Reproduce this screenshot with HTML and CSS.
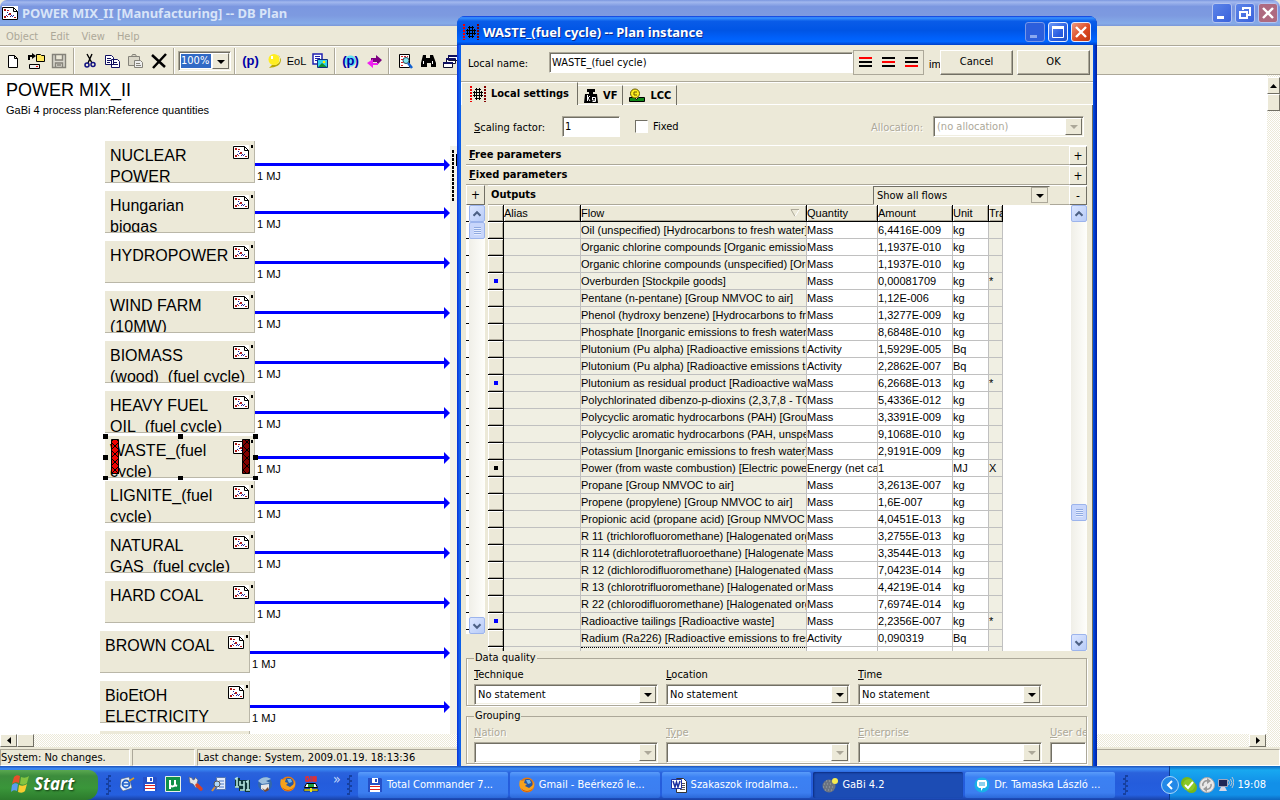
FILE: index.html
```html
<!DOCTYPE html>
<html lang="en">
<head>
<meta charset="utf-8">
<title>POWER MIX_II [Manufacturing] -- DB Plan</title>
<link rel="stylesheet" href="styles.css">
</head>
<body>
<svg class="defs" aria-hidden="true">
  <symbol id="plan" viewBox="0 0 16 14"><path fill="#fff" d="M0 0h16v14H0z"/><path fill="none" stroke="#000" d="M.5 1.500h11l4 4v8H.5zM11.500 1.500v4h4"/><path fill="#b01818" d="M2 3h2v2H2zM5 4h2v1H5zM7 7h2v2H7zM2 10h2v2H2zM5 10h1v1H5zM12 11h2v1h-2z"/><path fill="#2222a0" d="M5 6h1v1H5zM4 9h1v1H4zM9 9h1v1H9zM11 9h1v1h-1zM6 8h1v1H6zM10 10h1v1h-1zM8 10h1v1H8z"/></symbol>
  <symbol id="floppy" viewBox="0 0 16 16"><path fill="#2450c8" d="M1 1h13l1 1v13H1z"/><path fill="#fff" d="M5 1h6v5H5z"/><path fill="#2450c8" d="M8 2h2v3H8z"/><path fill="#fff" d="M3 8h10v7H3z"/><path fill="#e02020" d="M3 9h10v1H3zM3 12h10v1H3z"/></symbol>
  <symbol id="firefox" viewBox="0 0 16 16"><circle cx="8" cy="8" r="7.5" fill="#e87a10"/><circle cx="8.500" cy="7" r="5" fill="#2458a8"/><path fill="#6fb4e8" d="M7 3l4 0 1 3-3 1z"/><path fill="#f6a21c" d="M1 3l2 1 3-1-1 3 3 1-2 2 4 2 4-3 1-4c1 5-1 10-7 11C2 15-1 9 1 3z"/><path fill="#c84808" d="M2 11c3 4 9 4 12 0-2 4-9 6-12 0z"/></symbol>
  <symbol id="instance" viewBox="0 0 16 16"><path stroke="#f00000" stroke-width="2" stroke-dasharray="2 1" d="M1 0v16"/><path stroke="#800000" stroke-width="2" stroke-dasharray="2 1" d="M15 0v16"/><path fill="none" stroke="#000" d="M5 3.500h6M3 6.500h10M3 9.500h10M5 12.500h6M4.500 5v6M11.500 5v6M6.500 2v12M9.500 2v12"/></symbol>
  <symbol id="up" viewBox="0 0 16 16"><path fill="none" stroke="#4d6185" stroke-width="2.4" d="M4 10l4-4 4 4"/></symbol>
  <symbol id="down" viewBox="0 0 16 16"><path fill="none" stroke="#4d6185" stroke-width="2.4" d="M4 6l4 4 4-4"/></symbol>
</svg>

<div class="desktop">
<main class="window">
  <header class="titlebar inactive">
    <svg class="title-icon" width="16" height="14"><use href="#plan"/></svg>
    <h1>POWER MIX_II [Manufacturing] -- DB Plan</h1>
    <div class="caption">
      <button aria-label="Minimize"><svg width="18" height="18"><path fill="#fff" d="M4 12h7v3H4z"/></svg></button>
      <button aria-label="Restore"><svg width="18" height="18"><path fill="none" stroke="#fff" stroke-width="2" d="M7 6V4h7v7h-2M4 8h7v6H4z"/></svg></button>
      <button class="close" aria-label="Close"><svg width="18" height="18"><path stroke="#fff" stroke-width="2.4" d="M4 4l10 10M14 4L4 14"/></svg></button>
    </div>
  </header>
  <nav class="menubar"><button>Object</button><button>Edit</button><button>View</button><button>Help</button></nav>
  <div class="toolbar">
    <button aria-label="New"><svg width="16" height="16"><path fill="#fff" stroke="#000" d="M3.500 2.500h6l3 3v9h-9zM9.500 2.500v3h3"/></svg></button>
    <button aria-label="Open"><svg width="18" height="18"><path fill="#ffe860" stroke="#000" d="M9.500 2.500h4l1 1h3v6h-8z"/><path fill="#eee" stroke="#000" d="M2.500 12.500h10v4h-10z"/><path fill="none" stroke="#000" stroke-width="2" d="M2 8V4h3"/><path d="M5 1l4 3-4 3z"/><path fill="#d00" d="M9 14h2v1H9z"/></svg></button>
    <button aria-label="Save"><svg width="16" height="16"><path fill="#d8d6cc" stroke="#85837a" stroke-width="1.400" d="M1.500 1.500h13v13h-13zM4.500 2v5h7V2M4.500 14v-4h7v4M6 12h4"/></svg></button>
    <span class="sep"></span>
    <button aria-label="Cut"><svg width="16" height="16"><path stroke="#000" stroke-width="1.400" d="M5 1l5 9M10 1L6 10"/><g fill="none" stroke="#101080" stroke-width="1.500"><circle cx="5" cy="12" r="2"/><circle cx="11" cy="11.500" r="2"/></g></svg></button>
    <button aria-label="Copy"><svg width="17" height="16"><path fill="#fff" stroke="#101060" d="M1.500 2.500h6l2 2v7h-8zM7.500 6.500h6l2 2v6h-8z"/><path stroke="#101060" d="M3 5.500h4M3 7.500h4M3 9.500h3M9 9.500h4M9 11.500h5"/></svg></button>
    <button aria-label="Paste"><svg width="17" height="16"><path fill="#dad7c8" stroke="#85837a" d="M1.500 3.500h11v9h-11zM4.500 3.500l1-2h3l1 2z"/><path fill="#eee" stroke="#85837a" d="M7.500 7.500h6l2 2v5h-8zM9 10.500h4M9 12.500h5"/></svg></button>
    <button aria-label="Delete"><svg width="18" height="16"><path stroke="#000" stroke-width="2.500" d="M2 2l13 12M16 1L3 15"/></svg></button>
    <span class="sep"></span>
    <span class="combo zoom"><select aria-label="Zoom"><option>100%</option></select><i></i></span>
    <span class="sep"></span>
    <button class="glyph" aria-label="Parameters">(p)</button>
    <button aria-label="Note"><svg width="16" height="16"><path fill="#b8a800" d="M3 15l3-3c9 1 10-8 6-10l3 4c0 7-5 8-12 9z"/><circle cx="8" cy="6.500" r="5.500" fill="#ffee20"/><path fill="#fff" d="M5 3h2v3H5z"/></svg></button>
    <button class="eol">EoL</button>
    <button aria-label="Picture"><svg width="16" height="16"><path fill="#fff" stroke="#2020b0" stroke-width="1.500" d="M1 1h9v10H1z"/><path stroke="#2020b0" d="M3 3.500h5M3 5.500h5M3 7.500h3"/><path fill="#30d0f0" stroke="#103080" d="M5.500 6.500h10v8h-10z"/><path fill="#109030" d="M6 14l4-4 5 4z"/><circle cx="12" cy="9" r="1.300" fill="#fe0"/></svg></button>
    <span class="sep"></span>
    <button class="glyph disc" aria-label="Process">(p)</button>
    <button aria-label="Exchange"><svg width="16" height="16"><path fill="#7c0080" d="M5 5h5V2l6 5-5 5V9H5z"/><path fill="#f020f0" d="M12 10H7V6L1 10l6 5v-3h5z"/></svg></button>
    <span class="sep"></span>
    <button aria-label="Find in page"><svg width="16" height="16"><path fill="#fff" stroke="#000" d="M2.500 1.500h10v13h-10z"/><path stroke="#d02020" stroke-dasharray="2 1" d="M4 3.500h7M4 6.500h3M4 9.500h2M4 12.500h3"/><circle cx="9" cy="7.500" r="3" fill="#80e8f0" stroke="#345"/><path stroke="#1060d0" stroke-width="2.500" d="M11 10l4 5"/></svg></button>
    <button aria-label="Search"><svg width="16" height="16"><path d="M3 2h3v3h4V2h3l3 8v4h-5v-4H7v4H1v-4z"/><path fill="#fff" d="M3 8h1v3H3zM12 8h1v3h-1z"/></svg></button>
    <button aria-label="Windows"><svg width="16" height="16"><path fill="#fff" stroke="#101030" d="M5.500 2.500h10v5h-10zM3.500 5.500h9v5h-9zM.500 9.500h9v5h-9z"/><path stroke="#101060" stroke-width="2" d="M5 3h11M3 6h9M0 10h10"/></svg></button>
  </div>

  <div class="workspace">
    <section class="canvas">
      <h2>POWER MIX_II</h2>
      <p>GaBi 4 process plan:Reference quantities</p>

      <article class="node" style="left:105px;top:66px">NUCLEAR POWER<svg width="16" height="14"><use href="#plan"/></svg></article>
      <article class="node" style="left:105px;top:116px">Hungarian<br>biogas<svg width="16" height="14"><use href="#plan"/></svg></article>
      <article class="node" style="left:105px;top:166px">HYDROPOWER<svg width="16" height="14"><use href="#plan"/></svg></article>
      <article class="node" style="left:105px;top:216px">WIND FARM (10MW)<svg width="16" height="14"><use href="#plan"/></svg></article>
      <article class="node" style="left:105px;top:266px">BIOMASS (wood)_(fuel cycle)<svg width="16" height="14"><use href="#plan"/></svg></article>
      <article class="node" style="left:105px;top:316px">HEAVY FUEL OIL_(fuel cycle)<svg width="16" height="14"><use href="#plan"/></svg></article>
      <article class="node" style="left:105px;top:361px">WASTE_(fuel cycle)<svg width="16" height="14"><use href="#plan"/></svg></article>
      <article class="node" style="left:105px;top:406px">LIGNITE_(fuel cycle)<svg width="16" height="14"><use href="#plan"/></svg></article>
      <article class="node" style="left:105px;top:456px">NATURAL GAS_(fuel cycle)<svg width="16" height="14"><use href="#plan"/></svg></article>
      <article class="node" style="left:105px;top:506px">HARD COAL<svg width="16" height="14"><use href="#plan"/></svg></article>
      <article class="node" style="left:100px;top:556px">BROWN COAL<svg width="16" height="14"><use href="#plan"/></svg></article>
      <article class="node" style="left:100px;top:606px">BioEtOH ELECTRICITY<svg width="16" height="14"><use href="#plan"/></svg></article>
      <article class="node" style="left:100px;top:656px"></article>

      <div class="link" style="left:255px;top:84px">1 MJ</div>
      <div class="link" style="left:255px;top:132px">1 MJ</div>
      <div class="link" style="left:255px;top:182px">1 MJ</div>
      <div class="link" style="left:255px;top:232px">1 MJ</div>
      <div class="link" style="left:255px;top:282px">1 MJ</div>
      <div class="link" style="left:255px;top:332px">1 MJ</div>
      <div class="link" style="left:255px;top:377px">1 MJ</div>
      <div class="link" style="left:255px;top:422px">1 MJ</div>
      <div class="link" style="left:255px;top:472px">1 MJ</div>
      <div class="link" style="left:255px;top:522px">1 MJ</div>
      <div class="link wide" style="left:250px;top:572px">1 MJ</div>
      <div class="link wide" style="left:250px;top:626px">1 MJ</div>

      <svg class="selection" style="left:103px;top:359px" width="156" height="46">
        <defs><pattern id="hatch" width="8" height="8" patternUnits="userSpaceOnUse"><path stroke="#000" d="M0 0l8 8M8 0L0 8"/></pattern></defs>
        <path fill="#f00000" stroke="#000" d="M8.500 5.500h7v34h-7z"/><path fill="url(#hatch)" d="M8 5h8v35H8z"/>
        <path fill="#800000" stroke="#000" d="M139.500 5.500h7v34h-7z"/><path fill="url(#hatch)" d="M139 5h8v35h-8z"/>
        <path d="M0 0h5v5H0zM75 0h5v5h-5zM150 0h5v5h-5zM0 21h5v5H0zM150 21h5v5h-5zM0 42h5v4H0zM75 42h5v4h-5zM150 42h5v4h-5z"/>
      </svg>
      <div class="target"></div>
    </section>
    <div class="vbar"><button aria-label="Scroll up"><svg width="7" height="4"><path d="M0 4l3.500-4L7 4z"/></svg></button><button aria-label="Thumb"></button></div>
  </div>
  <div class="hbar"><button aria-label="Scroll left"><svg width="4" height="7"><path d="M4 0v7L0 3.500z"/></svg></button><button aria-label="Thumb"></button><span></span><button aria-label="Scroll right"><svg width="4" height="7"><path d="M0 0v7l4-3.500z"/></svg></button></div>
  <footer class="status"><span>System: No changes.</span><span></span><span>Last change: System, 2009.01.19. 18:13:36</span></footer>
</main>

<section class="dialog" aria-label="Plan instance">
  <header class="titlebar">
    <svg class="title-icon" width="16" height="16"><use href="#instance"/></svg>
    <h1>WASTE_(fuel cycle) -- Plan instance</h1>
    <div class="caption">
      <button class="dim" aria-label="Minimize dialog"><svg width="18" height="18"><path fill="#8ba8f0" d="M4 12h7v3H4z"/></svg></button>
      <button aria-label="Maximize dialog"><svg width="18" height="18"><path fill="#fff" d="M3 3h12v3H3z"/><path fill="none" stroke="#fff" d="M3.500 4.500h11v10h-11z"/></svg></button>
      <button class="close" aria-label="Close dialog"><svg width="18" height="18"><path stroke="#fff" stroke-width="2.400" d="M4 4l10 10M14 4L4 14"/></svg></button>
    </div>
  </header>
  <div class="dialog-body">
    <div class="name-row">
      <label for="name">Local name:</label>
      <input id="name" class="field" type="text" value="WASTE_(fuel cycle)">
      <div class="aligns">
        <button class="a1" aria-label="Top"><i></i><i></i><i></i></button><button class="a2" aria-label="Middle"><i></i><i></i><i></i></button><button class="a3" aria-label="Bottom"><i></i><i></i><i></i></button>
      </div>
      <span class="im">im</span>
      <button class="push">Cancel</button><button class="push">OK</button>
    </div>
    <div class="tabs">
      <button class="tab active"><svg width="16" height="16"><use href="#instance"/></svg>Local settings</button>
      <button class="tab"><svg width="14" height="16"><path d="M3 1h8v3H9v2h4l1 9H0l1-9h4V4H3z"/><path stroke="#fff" fill="none" d="M3.500 7v6M6 8l-2 2 2 3M8.500 9.500h3v4h-3M8.500 9v3h3"/></svg>VF</button>
      <button class="tab"><svg width="16" height="16"><path fill="#108818" stroke="#000" d="M.500 9.500h5l2 2 2-2h6v4H.500z"/><circle cx="6" cy="5.500" r="4.500" fill="#ffee20" stroke="#665800"/><path fill="none" stroke="#665800" d="M8 4H5v3h3"/></svg>LCC</button>
    </div>
    <div class="panel">
      <div class="scale-row">
        <label for="scale"><u>S</u>caling factor:</label>
        <input id="scale" class="field" type="text" value="1">
        <label class="check"><input type="checkbox">Fixed</label>
        <label class="off allocation" for="alloc">Allocation:</label>
        <span class="combo off"><select id="alloc" disabled><option>(no allocation)</option></select><i></i></span>
      </div>
      <div class="bar"><b><u>F</u>ree parameters</b><button aria-label="Expand free parameters">+</button></div>
      <div class="bar"><b><u>F</u>ixed parameters</b><button aria-label="Expand fixed parameters">+</button></div>
      <div class="flows">
        <div class="side">
          <button class="plus" aria-label="Expand inputs">+</button>
          <div class="side-body"><div class="ticks"></div>
            <div class="xpbar"><button aria-label="Up"><svg width="14" height="14"><use href="#up"/></svg></button><button class="thumb" aria-label="Thumb"></button><span></span><button aria-label="Down"><svg width="14" height="14"><use href="#down"/></svg></button></div>
          </div>
        </div>
        <div class="outputs">
          <div class="bar out"><b>Outputs</b><span class="combo flat"><select aria-label="Flow filter"><option>Show all flows</option></select><i></i></span><button aria-label="Collapse outputs">-</button></div>
          <div class="grid-area">
            <div class="grid-clip">
            <table>
              <colgroup><col class="c0"><col class="c1"><col class="c2"><col class="c3"><col class="c4"><col class="c5"><col class="c6"></colgroup>
              <thead><tr><th></th><th>Alias</th><th>Flow<svg width="10" height="8"><path fill="none" stroke="#aca899" d="M9 .500H1l4 7"/><path stroke="#fff" d="M5 7.500L9 1"/></svg></th><th>Quantity</th><th>Amount</th><th>Unit</th><th>Tra</th></tr></thead>
              <tbody>
              <tr><td></td><td></td><td>Oil (unspecified) [Hydrocarbons to fresh water]</td><td>Mass</td><td>6,4416E-009</td><td>kg</td><td></td></tr>
              <tr><td></td><td></td><td>Organic chlorine compounds [Organic emissions</td><td>Mass</td><td>1,1937E-010</td><td>kg</td><td></td></tr>
              <tr><td></td><td></td><td>Organic chlorine compounds (unspecified) [Org</td><td>Mass</td><td>1,1937E-010</td><td>kg</td><td></td></tr>
              <tr><td><i></i></td><td></td><td>Overburden [Stockpile goods]</td><td>Mass</td><td>0,00081709</td><td>kg</td><td>*</td></tr>
              <tr><td></td><td></td><td>Pentane (n-pentane) [Group NMVOC to air]</td><td>Mass</td><td>1,12E-006</td><td>kg</td><td></td></tr>
              <tr><td></td><td></td><td>Phenol (hydroxy benzene) [Hydrocarbons to fr</td><td>Mass</td><td>1,3277E-009</td><td>kg</td><td></td></tr>
              <tr><td></td><td></td><td>Phosphate [Inorganic emissions to fresh water]</td><td>Mass</td><td>8,6848E-010</td><td>kg</td><td></td></tr>
              <tr><td></td><td></td><td>Plutonium (Pu alpha) [Radioactive emissions to</td><td>Activity</td><td>1,5929E-005</td><td>Bq</td><td></td></tr>
              <tr><td></td><td></td><td>Plutonium (Pu alpha) [Radioactive emissions to</td><td>Activity</td><td>2,2862E-007</td><td>Bq</td><td></td></tr>
              <tr><td><i></i></td><td></td><td>Plutonium as residual product [Radioactive was</td><td>Mass</td><td>6,2668E-013</td><td>kg</td><td>*</td></tr>
              <tr><td></td><td></td><td>Polychlorinated dibenzo-p-dioxins (2,3,7,8 - TC</td><td>Mass</td><td>5,4336E-012</td><td>kg</td><td></td></tr>
              <tr><td></td><td></td><td>Polycyclic aromatic hydrocarbons (PAH) [Group</td><td>Mass</td><td>3,3391E-009</td><td>kg</td><td></td></tr>
              <tr><td></td><td></td><td>Polycyclic aromatic hydrocarbons (PAH, unspec</td><td>Mass</td><td>9,1068E-010</td><td>kg</td><td></td></tr>
              <tr><td></td><td></td><td>Potassium [Inorganic emissions to fresh water]</td><td>Mass</td><td>2,9191E-009</td><td>kg</td><td></td></tr>
              <tr class="current"><td><i></i></td><td></td><td>Power (from waste combustion) [Electric power</td><td>Energy (net ca</td><td>1</td><td>MJ</td><td>X</td></tr>
              <tr><td></td><td></td><td>Propane [Group NMVOC to air]</td><td>Mass</td><td>3,2613E-007</td><td>kg</td><td></td></tr>
              <tr><td></td><td></td><td>Propene (propylene) [Group NMVOC to air]</td><td>Mass</td><td>1,6E-007</td><td>kg</td><td></td></tr>
              <tr><td></td><td></td><td>Propionic acid (propane acid) [Group NMVOC to</td><td>Mass</td><td>4,0451E-013</td><td>kg</td><td></td></tr>
              <tr><td></td><td></td><td>R 11 (trichlorofluoromethane) [Halogenated org</td><td>Mass</td><td>3,2755E-013</td><td>kg</td><td></td></tr>
              <tr><td></td><td></td><td>R 114 (dichlorotetrafluoroethane) [Halogenate</td><td>Mass</td><td>3,3544E-013</td><td>kg</td><td></td></tr>
              <tr><td></td><td></td><td>R 12 (dichlorodifluoromethane) [Halogenated o</td><td>Mass</td><td>7,0423E-014</td><td>kg</td><td></td></tr>
              <tr><td></td><td></td><td>R 13 (chlorotrifluoromethane) [Halogenated org</td><td>Mass</td><td>4,4219E-014</td><td>kg</td><td></td></tr>
              <tr><td></td><td></td><td>R 22 (chlorodifluoromethane) [Halogenated org</td><td>Mass</td><td>7,6974E-014</td><td>kg</td><td></td></tr>
              <tr><td><i></i></td><td></td><td>Radioactive tailings [Radioactive waste]</td><td>Mass</td><td>2,2356E-007</td><td>kg</td><td>*</td></tr>
              <tr><td></td><td></td><td>Radium (Ra226) [Radioactive emissions to fresh</td><td>Activity</td><td>0,090319</td><td>Bq</td><td></td></tr>
              <tr class="last"><td></td><td></td><td></td><td></td><td></td><td></td><td></td></tr>
              </tbody>
            </table>
            </div>
            <div class="xpbar"><button aria-label="Up"><svg width="14" height="14"><use href="#up"/></svg></button><span class="above"></span><button class="thumb" aria-label="Thumb"></button><span class="below"></span><button aria-label="Down"><svg width="14" height="14"><use href="#down"/></svg></button></div>
          </div>
        </div>
      </div>
      <fieldset>
        <legend>Data quality</legend>
        <div class="cell"><label for="q1"><u>T</u>echnique</label><span class="combo"><select id="q1"><option>No statement</option></select><i></i></span></div>
        <div class="cell"><label for="q2"><u>L</u>ocation</label><span class="combo"><select id="q2"><option>No statement</option></select><i></i></span></div>
        <div class="cell"><label for="q3"><u>T</u>ime</label><span class="combo"><select id="q3"><option>No statement</option></select><i></i></span></div>
      </fieldset>
      <fieldset class="grouping">
        <legend>Grouping</legend>
        <div class="cell off"><label for="g1"><u>N</u>ation</label><span class="combo off"><select id="g1" disabled></select><i></i></span></div>
        <div class="cell off"><label for="g2"><u>Ty</u>pe</label><span class="combo off"><select id="g2" disabled></select><i></i></span></div>
        <div class="cell off"><label for="g3"><u>E</u>nterprise</label><span class="combo off"><select id="g3" disabled></select><i></i></span></div>
        <div class="cell off"><label for="g4"><u>U</u>ser de</label><input id="g4" class="field" disabled></div>
      </fieldset>
    </div>
  </div>
</section>
</div>

<footer class="taskbar">
  <button class="start"><svg width="20" height="20" viewBox="0 0 20 20"><path fill="#e8502a" d="M3 3c2-2 4-2 6-1L8 9C6 8 4 8 1 10z"/><path fill="#84c440" d="M10 3c3 1 5 1 8-1l-2 7c-2 2-4 2-7 1z"/><path fill="#5a9cf0" d="M1 11c2-2 4-2 6-1l-1 7c-2-1-4-1-6 1z"/><path fill="#f8cc30" d="M8 11c3 1 5 1 8-1l-2 7c-2 2-4 2-7 1z"/></svg>Start</button>
  <span class="grip"></span>
  <div class="quick">
    <button aria-label="Mail"><svg width="16" height="16"><path fill="#e8f0fc" stroke="#456" stroke-width=".5" d="M2 3l8-2 3 11-9 3-3-4z"/><circle cx="7" cy="8" r="3.500" fill="none" stroke="#2060c8" stroke-width="1.800"/><path stroke="#2060c8" stroke-width="1.500" d="M4 8h6"/><path stroke="#e0a020" stroke-width="1.500" d="M10 5l5-3"/></svg></button>
    <button aria-label="Total Commander"><svg width="16" height="16"><use href="#floppy"/></svg></button>
    <button aria-label="Torrent"><svg width="16" height="16"><path fill="#109048" stroke="#e8f0e8" d="M.500.500h15v15H.500z"/><path fill="none" stroke="#fff" stroke-width="2" d="M5 13V4M5 9c1 2 5 2 5-1V4M10 9l2 1"/></svg></button>
    <button aria-label="Tools"><svg width="16" height="16"><path fill="#e0e4e8" stroke="#556" stroke-width=".6" d="M1 1l3 1 1 2 2-1 0-2 3 3-1 3 2 2-3 3-3-4-3-1z"/><path stroke="#d84028" stroke-width="3.500" stroke-linecap="round" d="M9 9l4 4"/></svg></button>
    <button aria-label="Viewer"><svg width="16" height="16"><path fill="#e4ecfc" stroke="#5878b0" d="M5.500 1.500h9v12h-9z"/><path stroke="#4878c8" d="M8 5h5M8 8h5M8 11h5"/><circle cx="6" cy="8" r="3" fill="#b0d8f8" stroke="#555"/><path stroke="#d09040" stroke-width="2" d="M4 11l-3 4"/></svg></button>
    <button aria-label="Counter"><svg width="16" height="16"><path fill="#103838" d="M1 2h5v10H1zM5 4h7v11H5zM11 4h5v12h-5z"/><path stroke="#b8e8e0" stroke-width="1.600" fill="none" d="M1 3l2-1v9M1 11h4M6 5v4h4V5M10 9v5H6M12 6l2-1v9M12 14h4"/></svg></button>
    <button aria-label="Thunderbird"><svg width="16" height="16"><circle cx="8" cy="8" r="7" fill="#3468a8"/><path fill="#9cc0e0" d="M1 5c3-4 9-5 13-2l-5 2 4 2-8 1z"/><path fill="#e8e8e8" d="M4 9l8-1 0 5-4 2-4-2z"/><path fill="#7a4a30" d="M5 12l3 2 3-3 1 3-4 2z"/></svg></button>
    <button aria-label="Firefox"><svg width="16" height="16"><use href="#firefox"/></svg></button>
    <button aria-label="GIB"><svg width="16" height="16"><path stroke="#ff2818" stroke-width="1.300" fill="none" d="M6 1H3v4h3V3H5M8 0v6M10 1v4h3V1zM10 3h3"/><path fill="#fff" stroke="#000" d="M3.500 7.500h9l2 4h-13z"/><path fill="#20a040" d="M5 8h6v3H5z"/><path fill="#e8e020" stroke="#000" stroke-width=".5" d="M1 13h14v2H1z"/><path fill="#e8e020" d="M7 12h2v4H7z"/></svg></button>
    <span class="more">»</span>
  </div>
  <span class="grip"></span>
  <div class="tasks">
    <button><svg width="16" height="16"><use href="#floppy"/></svg>Total Commander 7...</button>
    <button><svg width="16" height="16"><use href="#firefox"/></svg>Gmail - Beérkező le...</button>
    <button><svg width="16" height="16"><path fill="#fff" stroke="#333" d="M5.500 1.500h7l3 3v11h-10z"/><path stroke="#555" d="M9 6.500h5M9 8.500h5M9 10.500h5M9 12.500h5"/><path fill="#fff" stroke="#1c30a0" d="M.500 2.500h10v9H.500z"/><path fill="none" stroke="#1c30a0" stroke-width="1.500" d="M2 4l2 6 1.500-5L7 10l2-6"/></svg>Szakaszok irodalma...</button>
    <button class="pressed"><svg width="16" height="16"><circle cx="7" cy="9" r="6.500" fill="#6c7480"/><path stroke="#9ca4ac" stroke-dasharray="1 2" d="M2 7h9M1 10h11M3 13h8M4 4h6"/><circle cx="13" cy="4" r="3" fill="#f8ec50"/></svg>GaBi 4.2</button>
    <button><svg width="16" height="16"><circle cx="8" cy="8" r="7.500" fill="#18b0e8"/><path fill="#fff" d="M4 3h8l1 2v4l-2 2H9l-2 3v-3H5L3 9V5z"/><path stroke="#18a0d8" d="M5 6h6M5 8h6"/></svg>Dr. Tamaska László ...</button>
  </div>
  <span class="grip"></span>
  <div class="tray">
    <button class="round" aria-label="Show hidden icons"><svg width="18" height="18"><circle cx="9" cy="9" r="8.500" fill="#2288e8" stroke="#a8d4f8"/><path fill="none" stroke="#fff" stroke-width="2" d="M11 5L7 9l4 4"/></svg></button>
    <svg width="16" height="16"><circle cx="6" cy="6" r="6" fill="#78b818"/><circle cx="10.500" cy="10.500" r="5.500" fill="#78b818"/><circle cx="8" cy="8" r="6" fill="#8cc828"/><path fill="none" stroke="#fff" stroke-width="2" d="M4 8l3 3 5-6"/></svg>
    <svg width="16" height="16"><circle cx="8" cy="8" r="7.500" fill="#e8e8e8" stroke="#aaa"/><path fill="none" stroke="#999" stroke-width="1.600" d="M4 9a4 4 0 0 1 5-5M12 7a4 4 0 0 1-5 5"/><path fill="#999" d="M8 1l4 3-4 3zM8 9v6l-4-3z"/></svg>
    <svg width="17" height="16"><path fill="#202858" stroke="#a0a8c0" d="M1.500 2.500h9v7h-9z"/><path fill="#d8d8e8" d="M4 10h4l2 4H2z"/><path fill="none" stroke="#c0c8d0" d="M11.500 3q2 3 0 5M13.500 2q3 4 0 7M15 0q3.500 5 0 11"/></svg>
    <time>19:08</time>
  </div>
</footer>
</body>
</html>
```
FILE: styles.css
```css
* { box-sizing: border-box; }
:root {
  --face: #ece9d8;
  --shade: #aca899;
  --dark: #716f64;
  --ui: "DejaVu Sans Condensed", "Liberation Sans", sans-serif;
  --narrow: "Liberation Sans", sans-serif;
}
body {
  margin: 0;
  height: 100vh;
  display: flex;
  flex-direction: column;
  overflow: hidden;
  font: 11px/14px var(--ui);
  color: #000;
}
button, input, select { font: inherit; color: inherit; margin: 0; padding: 0; border: 0; border-radius: 0; background: none; }
svg { display: block; flex: none; }
.defs { position: absolute; width: 0; height: 0; }
.desktop { position: relative; flex: 1; min-height: 0; display: flex; }

/* windows */
.window { flex: 1; min-width: 0; display: flex; flex-direction: column; background: var(--face); }
.titlebar {
  display: flex;
  align-items: center;
  height: 29px;
  flex: none;
  padding: 2px 2px 0 6px;
  gap: 4px;
  color: #fff;
  border-radius: 7px 7px 0 0;
  background: linear-gradient(#0831d9 0, #3a93ff 6%, #0a5ce8 18%, #0055e5 50%, #0060fa 75%, #0066ff 88%, #0040c8);
}
.titlebar h1 { flex: 1; margin: 0; font: bold 13px/20px "Noto Sans", sans-serif; text-shadow: 1px 1px #0a2a90; white-space: nowrap; }
.titlebar.inactive {
  height: 26px;
  padding: 0 2px;
  color: #d8e4f8;
  background: linear-gradient(#7a96df, #a2b8ee 8%, #7b97e0 25%, #7d9ae0 60%, #86abe8 90%, #7b97d8);
}
.titlebar.inactive h1 { text-shadow: none; }
.caption { display: flex; gap: 3px; }
.caption button {
  width: 20px;
  height: 20px;
  border: 1px solid #e4ecff;
  border-radius: 3px;
  background: linear-gradient(135deg, #6a98f8, #2a5ce0 60%, #2050c8);
}
.caption .dim { border-color: #7898e8; background: #2c5edc; }
.caption .close { background: linear-gradient(135deg, #f09a80, #dc4a24 55%, #c03810); }
.inactive .caption button { border-color: #b4c4f0; background: linear-gradient(135deg, #5c84e8, #3a62dc); }
.inactive .caption .close { background: #ae6a80; }

.menubar { display: flex; height: 20px; flex: none; padding-left: 6px; gap: 12px; color: var(--shade); border-bottom: 1px solid var(--shade); }
.menubar button { padding-top: 2px; }
.toolbar { display: flex; align-items: center; height: 29px; flex: none; padding-left: 1px; border-top: 1px solid #fff; border-bottom: 1px solid var(--shade); }
.toolbar button { width: 23px; height: 24px; display: flex; align-items: center; justify-content: center; flex: none; }
.sep { width: 8px; height: 26px; flex: none; background: linear-gradient(90deg, transparent 3px, var(--shade) 3px 4px, #fff 4px 5px, transparent 5px); }
.toolbar .glyph { color: #0000a8; font: bold 13px/16px var(--narrow); }
.glyph.disc { background: radial-gradient(circle, #60e0f0 0 5px, transparent 6px); }
.toolbar .eol { font-family: var(--narrow); }

/* combos and fields */
.combo { position: relative; display: flex; height: 21px; min-width: 0; background: #fff; border: 1px solid; border-color: var(--shade) #fff #fff var(--shade); box-shadow: inset 1px 1px var(--dark), inset -1px -1px #f1efe2; }
.combo select { appearance: none; flex: 1; min-width: 0; padding-left: 3px; opacity: 1; }
.combo i { position: absolute; top: 1px; right: 1px; bottom: 1px; width: 17px; pointer-events: none; background: var(--face); border: 1px solid; border-color: #fff var(--dark) var(--dark) #fff; }
.combo i::after { content: ""; position: absolute; left: 4px; top: 6px; border: 4px solid transparent; border-top-color: #000; border-bottom: 0; }
.combo.off, .off { color: var(--shade); }
.off label, label.off { text-shadow: 1px 1px #fff; }
.combo.off i::after { border-top-color: var(--shade); }
.combo.zoom { width: 53px; height: 20px; }
.zoom select { flex: none; width: 30px; height: 14px; margin: 2px; padding: 0; background: #316ac5; color: #fff; }
.combo.flat { width: 177px; height: 19px; background: var(--face); border-color: var(--dark) transparent transparent var(--dark); box-shadow: none; }
.flat i { border-color: var(--shade); top: 0; right: 1px; }
.field { height: 21px; padding: 0 2px; background: #fff; border: 1px solid; border-color: var(--shade) #fff #fff var(--shade); box-shadow: inset 1px 1px var(--dark); }

/* diagram */
.workspace { flex: 1; min-height: 0; display: flex; }
.canvas { position: relative; flex: 1; overflow: hidden; background: #fff; padding: 5px 6px; }
.canvas h2 { margin: 0; font: 18px/20px var(--narrow); }
.canvas p { margin: 3px 0 0; font: 11px/14px var(--narrow); }
.node {
  position: absolute;
  width: 150px;
  height: 42px;
  padding: 4px 8px 0 5px;
  overflow: hidden;
  background: var(--face);
  border: solid #bab7a8;
  border-width: 0 1px 1px 0;
  font: 16px/21px var(--narrow);
}
.node svg { position: absolute; right: 5px; top: 4px; }
.node::after { content: ""; position: absolute; right: 1px; top: 4px; width: 2px; height: 3px; background: #000; }
.link { position: absolute; width: 195px; height: 26px; padding: 10px 2px 0; font: 11px/14px var(--narrow); }
.link.wide { width: 200px; }
.link::before { content: ""; position: absolute; left: 0; right: 4px; top: 4px; height: 3px; background: #00f; }
.link::after { content: ""; position: absolute; right: 0; top: 0; border: 6px solid transparent; border-left-color: #00f; border-right: 0; }
.selection { position: absolute; }
.target { position: absolute; left: 450px; top: 71px; bottom: 0; width: 20px; background: #f4f3ea; }
.target::before { content: ""; position: absolute; left: 2px; top: 4px; width: 2px; height: 51px; background: repeating-linear-gradient(#000 0 3px, transparent 3px 4px); }
.target::after { content: ""; position: absolute; left: 6px; top: 8px; width: 2px; height: 12px; background: #000; }
.vbar, .hbar { flex: none; display: flex; background: repeating-conic-gradient(#fff 0 25%, #ece9d8 0 50%) 0 0 / 2px 2px; }
.vbar { width: 13px; flex-direction: column; padding-top: 2px; }
.hbar { height: 13px; padding-right: 14px; }
.hbar span { flex: 1; }
.vbar button, .hbar button { width: 17px; height: 13px; display: flex; align-items: center; justify-content: center; background: var(--face); border: 1px solid; border-color: #fff var(--dark) var(--dark) #fff; }
.vbar button { width: 13px; height: 17px; }
.status { flex: none; display: flex; gap: 2px; height: 19px; padding-top: 2px; }
.status span { width: 130px; padding: 1px 0; border: 1px solid; border-color: var(--shade) #fff #fff var(--shade); white-space: nowrap; }
.status span:nth-child(2) { width: 63px; }
.status span:last-child { flex: 1; }

/* dialog */
.dialog { position: absolute; left: 457px; right: 183px; top: 16px; bottom: 0; display: flex; flex-direction: column; background: linear-gradient(90deg, #0831d9, #166aee 3px, #0055e5 4px calc(100% - 4px), #0040d8 calc(100% - 3px), #001ea0); border-radius: 8px 8px 0 0; overflow: hidden; }
.dialog .caption { margin-right: 4px; }
.dialog-body { flex: 1; min-height: 0; margin: 0 4px; display: flex; flex-direction: column; background: var(--face); }
.name-row { display: flex; align-items: center; height: 36px; flex: none; padding: 0 3px 2px 7px; }
.name-row label { width: 81px; padding-top: 3px; }
.name-row .field { flex: 1; min-width: 0; }
.aligns { display: flex; height: 25px; border: 1px solid var(--shade); }
.aligns button { width: 23px; padding: 0 5px; display: flex; flex-direction: column; justify-content: center; gap: 2px; }
.aligns i { height: 2px; background: #000; }
.a1 i:nth-child(1), .a2 i:nth-child(2), .a3 i:nth-child(3) { background: #f00; }
.im { padding: 3px 0 0 5px; width: 16px; overflow: hidden; font-family: var(--narrow); }
.push { width: 73px; height: 25px; margin-left: 4px; border: 1px solid; border-color: #fff var(--dark) var(--dark) #fff; box-shadow: inset -1px -1px var(--shade); }
.im + .push { margin-left: 0; }
.tabs { display: flex; align-items: flex-end; height: 24px; flex: none; border-top: 1px solid var(--shade); box-shadow: inset 0 1px #fff, inset 0 -1px #fff; }
.tab { display: flex; align-items: center; gap: 5px; height: 20px; padding: 0 5px 0 6px; font-weight: bold; border-right: 1px solid var(--dark); border-top: 1px solid #fff; }
.tab.active { height: 23px; padding: 0 8px; background: var(--face); border-left: 1px solid #fff; }
.panel { flex: 1; min-height: 0; display: flex; flex-direction: column; padding: 0 5px; border-right: 1px solid var(--dark); }
.scale-row { display: flex; align-items: center; height: 40px; flex: none; padding: 3px 3px 0 8px; }
.scale-row label:first-child { width: 88px; padding-top: 2px; }
.scale-row .field { width: 58px; }
.check { display: flex; align-items: center; gap: 5px; margin-left: 15px; }
.check input { appearance: none; width: 13px; height: 13px; background: #fff; border: 1px solid; border-color: var(--dark) #fff #fff var(--dark); }
.allocation { margin-left: auto; padding-top: 2px; }
.scale-row .combo { width: 151px; margin-left: 10px; }
.bar { display: flex; height: 20px; flex: none; border-top: 1px solid #fff; border-bottom: 1px solid var(--shade); }
.bar b { flex: 1; padding: 2px 3px; }
.bar button, .plus { width: 18px; height: 19px; font-size: 12px; border: 1px solid; border-color: #fff var(--dark) var(--dark) #fff; }
.flows { flex: 1; min-height: 0; display: flex; gap: 3px; }
.side { width: 19px; display: flex; flex-direction: column; }
.plus { width: 19px; height: 20px; flex: none; }
.side-body { flex: 1; min-height: 0; display: flex; padding-bottom: 17px; }
.ticks { width: 3px; background: repeating-linear-gradient(#fff 0 16px, #000 16px 17px); }
.xpbar { width: 16px; flex: none; display: flex; flex-direction: column; background: linear-gradient(90deg, #f0efe8, #fefefb); }
.xpbar span { flex: 1; }
.xpbar .above { flex: 5; }
.xpbar .below { flex: 2; }
.xpbar button { height: 17px; flex: none; padding: 0; border: 1px solid #9cb4ec; border-radius: 2px; background: linear-gradient(135deg, #dce6ff, #b8ccf8); }
.xpbar .thumb { background: repeating-linear-gradient(#8fa9e0 0 1px, #e4ecff 1px 2px) 50% 50% / 7px 8px no-repeat, #c8d6fb; }
.outputs { flex: 1; min-width: 0; display: flex; flex-direction: column; }
.out button { margin-left: 19px; }
.grid-area { flex: 1; min-height: 0; display: flex; background: #fff; }
.grid-clip { flex: 1; min-width: 0; overflow: hidden; }
table { table-layout: fixed; width: 515px; border-collapse: separate; border-spacing: 0; font-family: var(--narrow); }
.c0 { width: 16px; }
.c1 { width: 77px; }
.c2 { width: 226px; }
.c3 { width: 71px; }
.c4 { width: 75px; }
.c5 { width: 36px; }
.c6 { width: 14px; }
th, td { height: 17px; padding: 0; line-height: 16px; overflow: hidden; white-space: nowrap; text-align: left; border-right: 1px solid #c0c0c0; border-bottom: 1px solid #c0c0c0; }
th { background: var(--face); font-weight: normal; border-color: #000; box-shadow: inset 1px 1px #fff, inset -1px -1px var(--shade); }
th svg { float: right; margin: 4px 6px 0 0; }
td:nth-child(2), td:nth-child(3), td:nth-child(7) { background: #f0efe3; }
td:first-child { background: var(--face); border-color: #000; box-shadow: inset 1px 1px #fff, inset -1px -1px var(--shade); }
td i { display: block; width: 4px; height: 4px; margin-left: 6px; background: #00f; }
.current i { background: #000; }
.last td:nth-child(3) { border-top: 1px dotted #000; }
fieldset { display: grid; grid-template-columns: repeat(3, 184px) 1fr; column-gap: 8px; flex: none; height: 55px; min-width: 0; margin: 0 0 3px; padding: 0 0 0 7px; border: 1px solid var(--shade); box-shadow: inset 1px 0 #fff, 1px 1px #fff; }
fieldset.grouping { overflow: hidden; height: 55px; margin-bottom: 2px; }
legend { padding: 0 1px; line-height: 14px; }
.cell { display: flex; flex-direction: column; gap: 2px; min-width: 0; overflow: hidden; white-space: nowrap; padding-top: 3px; }
.cell label { line-height: 14px; }
.cell .combo, .cell .field { flex: none; }
.cell .field { width: 100%; }

/* taskbar */
.taskbar { display: flex; align-items: stretch; height: 34px; flex: none; color: #fff; background: linear-gradient(#1c50b8 0, #3c8cf4 8%, #2a62dc 20%, #245cdc 50%, #2560e0 85%, #1941a5); }
.start { width: 98px; flex: none; display: flex; align-items: center; gap: 3px; margin-top: 4px; padding: 0 0 2px 11px; font: italic bold 17px/24px "Open Sans", sans-serif; text-shadow: 1px 1px 2px #113a11; border-radius: 0 9px 12px 0; background: linear-gradient(#5aa850, #3c8c3c 20%, #3a963a 60%, #2c7a2c); }
.grip { width: 5px; flex: none; margin: 9px 0 5px 8px; background: repeating-conic-gradient(#1640a0 0 25%, transparent 0 50%) 0 0 / 5px 5px; }
.quick { display: flex; align-items: center; gap: 7px; padding: 4px 0 2px 8px; }
.more { padding: 0 0 10px 7px; color: #c8dcfc; width: 13px; font-size: 14px; }
.tasks { flex: 1; min-width: 0; display: flex; gap: 2px; padding: 6px 0 2px 6px; }
.tasks button { flex: 1; min-width: 0; display: flex; align-items: center; gap: 4px; padding: 0 9px; white-space: nowrap; border-radius: 2px; background: linear-gradient(#5a9cfa, #3c81f3 20%, #3c7ef0 80%, #2c68d8); }
.tasks .pressed { background: #1c4cb4; box-shadow: inset 1px 1px 2px #0c2c80; }
.tray { width: 111px; flex: none; margin-left: 41px; display: flex; align-items: center; gap: 2px; padding: 4px 0 0; background: linear-gradient(#0c68c0, #18a8f0 12%, #1290e8 50%, #1290e8 85%, #0c68c0); border-left: 1px solid #0c3c90; }
.round { margin-left: -9px; }
.tray time { margin-left: auto; padding-right: 14px; }
```
